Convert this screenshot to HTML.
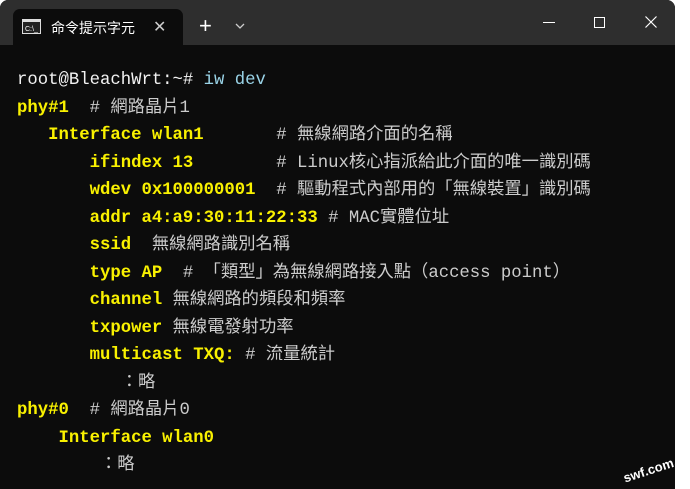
<!DOCTYPE html>
<html><head><meta charset="utf-8"><style>
html,body{margin:0;padding:0;background:#fff;width:690px;height:489px;overflow:hidden}
.win{position:absolute;left:0;top:0;width:675px;height:489px;background:#0c0c0c;border-radius:8px 8px 0 0;overflow:hidden}
.bar{position:absolute;left:0;top:0;width:675px;height:45px;background:#2e2e2e}
.tab{position:absolute;left:13px;top:9px;width:170px;height:36px;background:#0c0c0c;border-radius:7px 7px 0 0}
.tt{position:absolute;font-family:"Liberation Sans","Noto Sans CJK TC",sans-serif;color:#fff;font-size:14px}
.ln{position:absolute;left:17px;white-space:pre;font-family:"Liberation Mono","Noto Sans CJK TC",monospace;font-size:17.3px;line-height:27px;color:#cccccc}
.y{color:#f9f100;font-weight:bold}
.w{color:#f2f2f2}
.b{color:#9ad4e8}
</style></head><body>
<div class="win">
<div class="bar"></div>
<div class="tab"></div>
<svg style="position:absolute;left:22px;top:19px" width="19" height="15" viewBox="0 0 19 15"><rect x="0.5" y="0.5" width="18" height="14" fill="#222" stroke="#ddd"/><rect x="1" y="1" width="17" height="2" fill="#ddd"/><text x="3" y="12" font-size="7" fill="#fff" font-family="Liberation Sans">C:\_</text></svg>
<div class="tt" style="left:51px;top:18px">命令提示字元</div>
<div class="tt" style="left:153px;top:17px;font-size:16px;color:#ccc">✕</div>
<div class="tt" style="left:199px;top:13px;font-size:22px">+</div>
<svg style="position:absolute;left:235px;top:23px" width="10" height="6"><path d="M1 1L5 5L9 1" stroke="#ccc" fill="none" stroke-width="1.3"/></svg>
<div style="position:absolute;left:543px;top:22px;width:12px;height:1px;background:#fff"></div>
<div style="position:absolute;left:594px;top:17px;width:9px;height:9px;border:1px solid #fff"></div>
<svg style="position:absolute;left:645px;top:16px" width="12" height="12"><path d="M0.5 0.5L11.5 11.5M11.5 0.5L0.5 11.5" stroke="#fff" stroke-width="1.2"/></svg>

<div class="ln" style="top:67px"><span class="w">root@BleachWrt:~# </span><span class="b">iw dev</span></div>
<div class="ln" style="top:95px"><span class="y">phy#1</span>  # 網路晶片1</div>
<div class="ln" style="top:122px"><span class="y">   Interface wlan1</span>       # 無線網路介面的名稱</div>
<div class="ln" style="top:150px"><span class="y">       ifindex 13</span>        # Linux核心指派給此介面的唯一識別碼</div>
<div class="ln" style="top:177px"><span class="y">       wdev 0x100000001</span>  # 驅動程式內部用的「無線裝置」識別碼</div>
<div class="ln" style="top:205px"><span class="y">       addr a4:a9:30:11:22:33</span> # MAC實體位址</div>
<div class="ln" style="top:232px"><span class="y">       ssid</span>  無線網路識別名稱</div>
<div class="ln" style="top:260px"><span class="y">       type AP</span>  # 「類型」為無線網路接入點（access point）</div>
<div class="ln" style="top:287px"><span class="y">       channel</span> 無線網路的頻段和頻率</div>
<div class="ln" style="top:315px"><span class="y">       txpower</span> 無線電發射功率</div>
<div class="ln" style="top:342px"><span class="y">       multicast TXQ:</span> # 流量統計</div>
<div class="ln" style="top:370px">          ：略</div>
<div class="ln" style="top:397px"><span class="y">phy#0</span>  # 網路晶片0</div>
<div class="ln" style="top:425px"><span class="y">    Interface wlan0</span></div>
<div class="ln" style="top:452px">        ：略</div>
</div>
<div style="position:absolute;left:622px;top:460px;transform:rotate(-18deg);color:#fff;font:bold 13px 'Liberation Sans',sans-serif">swf.com.tw</div>
</body></html>
